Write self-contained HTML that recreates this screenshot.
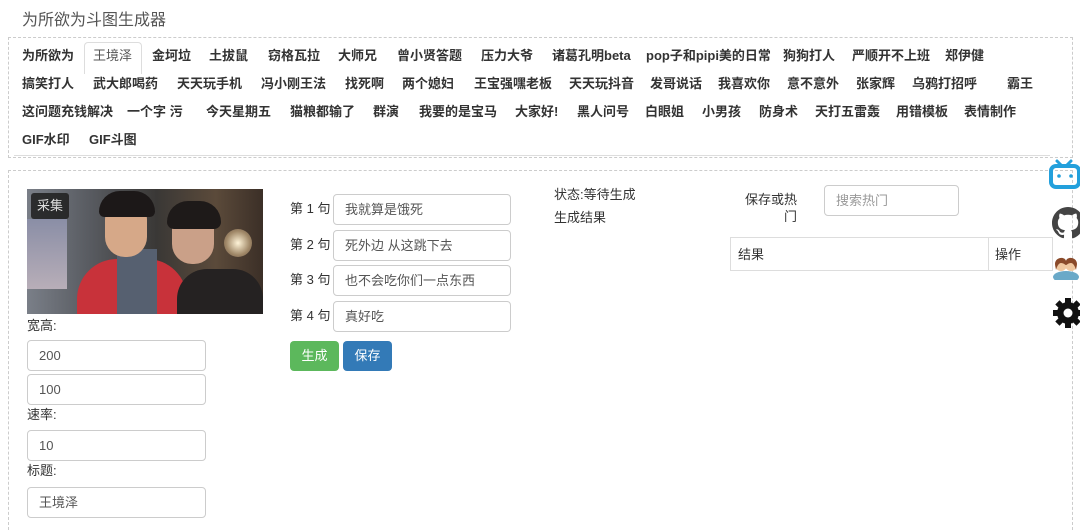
<!DOCTYPE html>
<html><head><meta charset="utf-8"><style>
*{box-sizing:border-box;margin:0;padding:0}
body{width:1080px;height:520px;overflow:hidden;background:#fff;font-family:"Liberation Sans","Noto Sans CJK SC",sans-serif;color:#333;position:relative}
.a{position:absolute;white-space:nowrap}
.t{font-size:13px;font-weight:bold;color:#333;position:absolute;white-space:nowrap;line-height:16px}
.inp{position:absolute;border:1px solid #ccc;border-radius:4px;height:31px;font-size:13px;color:#555;padding:0 11px;line-height:29px;background:#fff}
.lbl{position:absolute;font-size:13px;color:#333}
</style></head><body>
<div class="a" style="left:22px;top:6px;font-size:16px;color:#555">为所欲为斗图生成器</div>
<div class="a" style="left:8px;top:37px;width:1065px;height:121px;border:1px dashed #ccc"></div>
<div class="a" style="left:84px;top:42px;width:58px;height:32px;border:1px solid #ddd;border-bottom:none;border-radius:4px 4px 0 0;background:#fff"></div>
<div class="a" style="left:14px;top:155px;width:1036px;height:1px;background:#ddd"></div>
<div class="t" style="left:22px;top:48px">为所欲为</div>
<div class="t" style="left:93px;top:48px;font-weight:normal;color:#555">王境泽</div>
<div class="t" style="left:152px;top:48px">金坷垃</div>
<div class="t" style="left:209px;top:48px">土拔鼠</div>
<div class="t" style="left:268px;top:48px">窃格瓦拉</div>
<div class="t" style="left:338px;top:48px">大师兄</div>
<div class="t" style="left:397px;top:48px">曾小贤答题</div>
<div class="t" style="left:481px;top:48px">压力大爷</div>
<div class="t" style="left:552px;top:48px">诸葛孔明beta</div>
<div class="t" style="left:646px;top:48px">pop子和pipi美的日常</div>
<div class="t" style="left:783px;top:48px">狗狗打人</div>
<div class="t" style="left:852px;top:48px">严顺开不上班</div>
<div class="t" style="left:945px;top:48px">郑伊健</div>

<div class="t" style="left:22px;top:76px">搞笑打人</div>
<div class="t" style="left:93px;top:76px">武大郎喝药</div>
<div class="t" style="left:177px;top:76px">天天玩手机</div>
<div class="t" style="left:261px;top:76px">冯小刚王法</div>
<div class="t" style="left:345px;top:76px">找死啊</div>
<div class="t" style="left:402px;top:76px">两个媳妇</div>
<div class="t" style="left:474px;top:76px">王宝强嘿老板</div>
<div class="t" style="left:569px;top:76px">天天玩抖音</div>
<div class="t" style="left:650px;top:76px">发哥说话</div>
<div class="t" style="left:718px;top:76px">我喜欢你</div>
<div class="t" style="left:787px;top:76px">意不意外</div>
<div class="t" style="left:856px;top:76px">张家辉</div>
<div class="t" style="left:912px;top:76px">乌鸦打招呼</div>
<div class="t" style="left:1007px;top:76px">霸王</div>

<div class="t" style="left:22px;top:104px">这问题充钱解决</div>
<div class="t" style="left:127px;top:104px">一个字 污</div>
<div class="t" style="left:206px;top:104px">今天星期五</div>
<div class="t" style="left:290px;top:104px">猫粮都输了</div>
<div class="t" style="left:373px;top:104px">群演</div>
<div class="t" style="left:419px;top:104px">我要的是宝马</div>
<div class="t" style="left:515px;top:104px">大家好!</div>
<div class="t" style="left:577px;top:104px">黑人问号</div>
<div class="t" style="left:645px;top:104px">白眼姐</div>
<div class="t" style="left:702px;top:104px">小男孩</div>
<div class="t" style="left:759px;top:104px">防身术</div>
<div class="t" style="left:815px;top:104px">天打五雷轰</div>
<div class="t" style="left:896px;top:104px">用错模板</div>
<div class="t" style="left:964px;top:104px">表情制作</div>

<div class="t" style="left:22px;top:132px">GIF水印</div>
<div class="t" style="left:89px;top:132px">GIF斗图</div>

<div class="a" style="left:8px;top:170px;width:1065px;height:360px;border:1px dashed #ccc;border-bottom:none"></div>

<div class="a" style="left:27px;top:189px;width:236px;height:125px;overflow:hidden;background:linear-gradient(90deg,#7a7f88 0%,#5a5d63 25%,#3a3836 55%,#5b4a3a 80%,#3b2f27 100%)">
<div class="a" style="left:0;top:30px;width:40px;height:70px;background:linear-gradient(#8a8ea6,#b8aeb8)"></div>
<div class="a" style="left:50px;top:70px;width:110px;height:60px;border-radius:40px 40px 0 0;background:#c8323a"></div>
<div class="a" style="left:90px;top:60px;width:40px;height:70px;background:#566070"></div>
<div class="a" style="left:78px;top:10px;width:42px;height:58px;border-radius:20px;background:#d6a888"></div>
<div class="a" style="left:72px;top:2px;width:56px;height:26px;border-radius:24px 24px 6px 6px;background:#1c1818"></div>
<div class="a" style="left:145px;top:20px;width:42px;height:55px;border-radius:20px;background:#caa088"></div>
<div class="a" style="left:140px;top:12px;width:54px;height:28px;border-radius:24px 24px 8px 8px;background:#1e1a19"></div>
<div class="a" style="left:150px;top:80px;width:86px;height:50px;border-radius:30px 30px 0 0;background:#252222"></div>
<div class="a" style="left:197px;top:40px;width:28px;height:28px;border-radius:50%;background:radial-gradient(#fff4d8,#a08868 60%,#6a5444)"></div>
<div class="a" style="left:4px;top:4px;width:38px;height:26px;border-radius:3px;background:rgba(30,30,30,.85);color:#ddd;font-size:13px;text-align:center;line-height:26px">采集</div>
</div>

<div class="lbl" style="left:27px;top:315px">宽高:</div>
<div class="inp" style="left:27px;top:340px;width:179px">200</div>
<div class="inp" style="left:27px;top:374px;width:179px">100</div>
<div class="lbl" style="left:27px;top:404px">速率:</div>
<div class="inp" style="left:27px;top:430px;width:179px">10</div>
<div class="lbl" style="left:27px;top:460px">标题:</div>
<div class="inp" style="left:27px;top:487px;width:179px">王境泽</div>

<div class="lbl" style="left:290px;top:198px">第 1 句</div>
<div class="inp" style="left:333px;top:194px;width:178px">我就算是饿死</div>
<div class="lbl" style="left:290px;top:234px">第 2 句</div>
<div class="inp" style="left:333px;top:230px;width:178px">死外边 从这跳下去</div>
<div class="lbl" style="left:290px;top:269px">第 3 句</div>
<div class="inp" style="left:333px;top:265px;width:178px">也不会吃你们一点东西</div>
<div class="lbl" style="left:290px;top:305px">第 4 句</div>
<div class="inp" style="left:333px;top:301px;width:178px">真好吃</div>
<div class="a" style="left:290px;top:341px;width:49px;height:30px;border-radius:4px;background:#5cb85c;color:#fff;font-size:13px;text-align:center;line-height:30px">生成</div>
<div class="a" style="left:343px;top:341px;width:49px;height:30px;border-radius:4px;background:#337ab7;color:#fff;font-size:13px;text-align:center;line-height:30px">保存</div>

<div class="lbl" style="left:554px;top:184px">状态:等待生成</div>
<div class="lbl" style="left:554px;top:207px">生成结果</div>
<div class="lbl" style="left:740px;top:191px;width:57px;text-align:right;line-height:17px;white-space:normal">保存或热门</div>
<div class="inp" style="left:824px;top:185px;width:135px;color:#999">搜索热门</div>
<div class="a" style="left:730px;top:237px;width:323px;height:34px;border:1px solid #ddd"></div>
<div class="a" style="left:988px;top:237px;width:1px;height:34px;background:#ddd"></div>
<div class="lbl" style="left:738px;top:244px">结果</div>
<div class="lbl" style="left:995px;top:244px">操作</div>

<svg class="a" style="left:1048px;top:158px" width="32" height="32" viewBox="0 0 32 32"><path d="M9 3l5 5M23 3l-5 5" stroke="#23a0dc" stroke-width="3" stroke-linecap="round"/><rect x="3" y="8" width="28" height="21" rx="5" fill="none" stroke="#23a0dc" stroke-width="4"/><circle cx="11" cy="18" r="1.8" fill="#23a0dc"/><circle cx="23" cy="18" r="1.8" fill="#23a0dc"/></svg>
<svg class="a" style="left:1052px;top:205px" width="32" height="36" viewBox="0 0 16 16"><path fill="#444" d="M8 0C3.58 0 0 3.58 0 8c0 3.54 2.290 6.530 5.470 7.590.4.07.55-.17.55-.38v-1.33c-2.23.48-2.7-1.070-2.7-1.070-.36-.92-.89-1.170-.89-1.170-.73-.5.06-.49.06-.49.8.06 1.230.83 1.230.83.72 1.230 1.870.87 2.330.66.07-.52.28-.87.51-1.070-1.780-.2-3.640-.89-3.640-3.950 0-.87.31-1.590.82-2.150-.08-.2-.36-1.020.08-2.120 0 0 .67-.21 2.200.82.64-.18 1.320-.27 2-.27.68 0 1.360.09 2 .27 1.530-1.040 2.200-.82 2.200-.82.44 1.100.16 1.920.08 2.120.51.56.82 1.270.82 2.150 0 3.070-1.870 3.750-3.650 3.950.29.25.54.73.54 1.480v2.200c0 .21.15.46.55.38A8.010 8.010 0 0016 8c0-4.420-3.580-8-8-8z"/></svg>
<svg class="a" style="left:1052px;top:252px" width="28" height="28" viewBox="0 0 28 28"><ellipse cx="14" cy="25" rx="13" ry="6" fill="#6aa9c8"/><circle cx="9" cy="13" r="6" fill="#f0c8a0"/><circle cx="19" cy="13" r="6" fill="#f0c8a0"/><path d="M3 12c0-7 10-8 11-3 1-5 11-4 11 3l-1 6c-1-4-3-7-5-7-3 0-4 2-5 2s-2-2-5-2c-2 0-4 3-5 7z" fill="#8a4a2a"/></svg>
<svg class="a" style="left:1052px;top:297px" width="32" height="32" viewBox="0 0 32 32"><g fill="#111"><circle cx="16" cy="16" r="11"/><rect x="13" y="1" width="6" height="30"/><rect x="1" y="13" width="30" height="6"/><rect x="13" y="1" width="6" height="30" transform="rotate(45 16 16)"/><rect x="13" y="1" width="6" height="30" transform="rotate(-45 16 16)"/></g><circle cx="16" cy="16" r="4.5" fill="#fff"/></svg>
</body></html>
